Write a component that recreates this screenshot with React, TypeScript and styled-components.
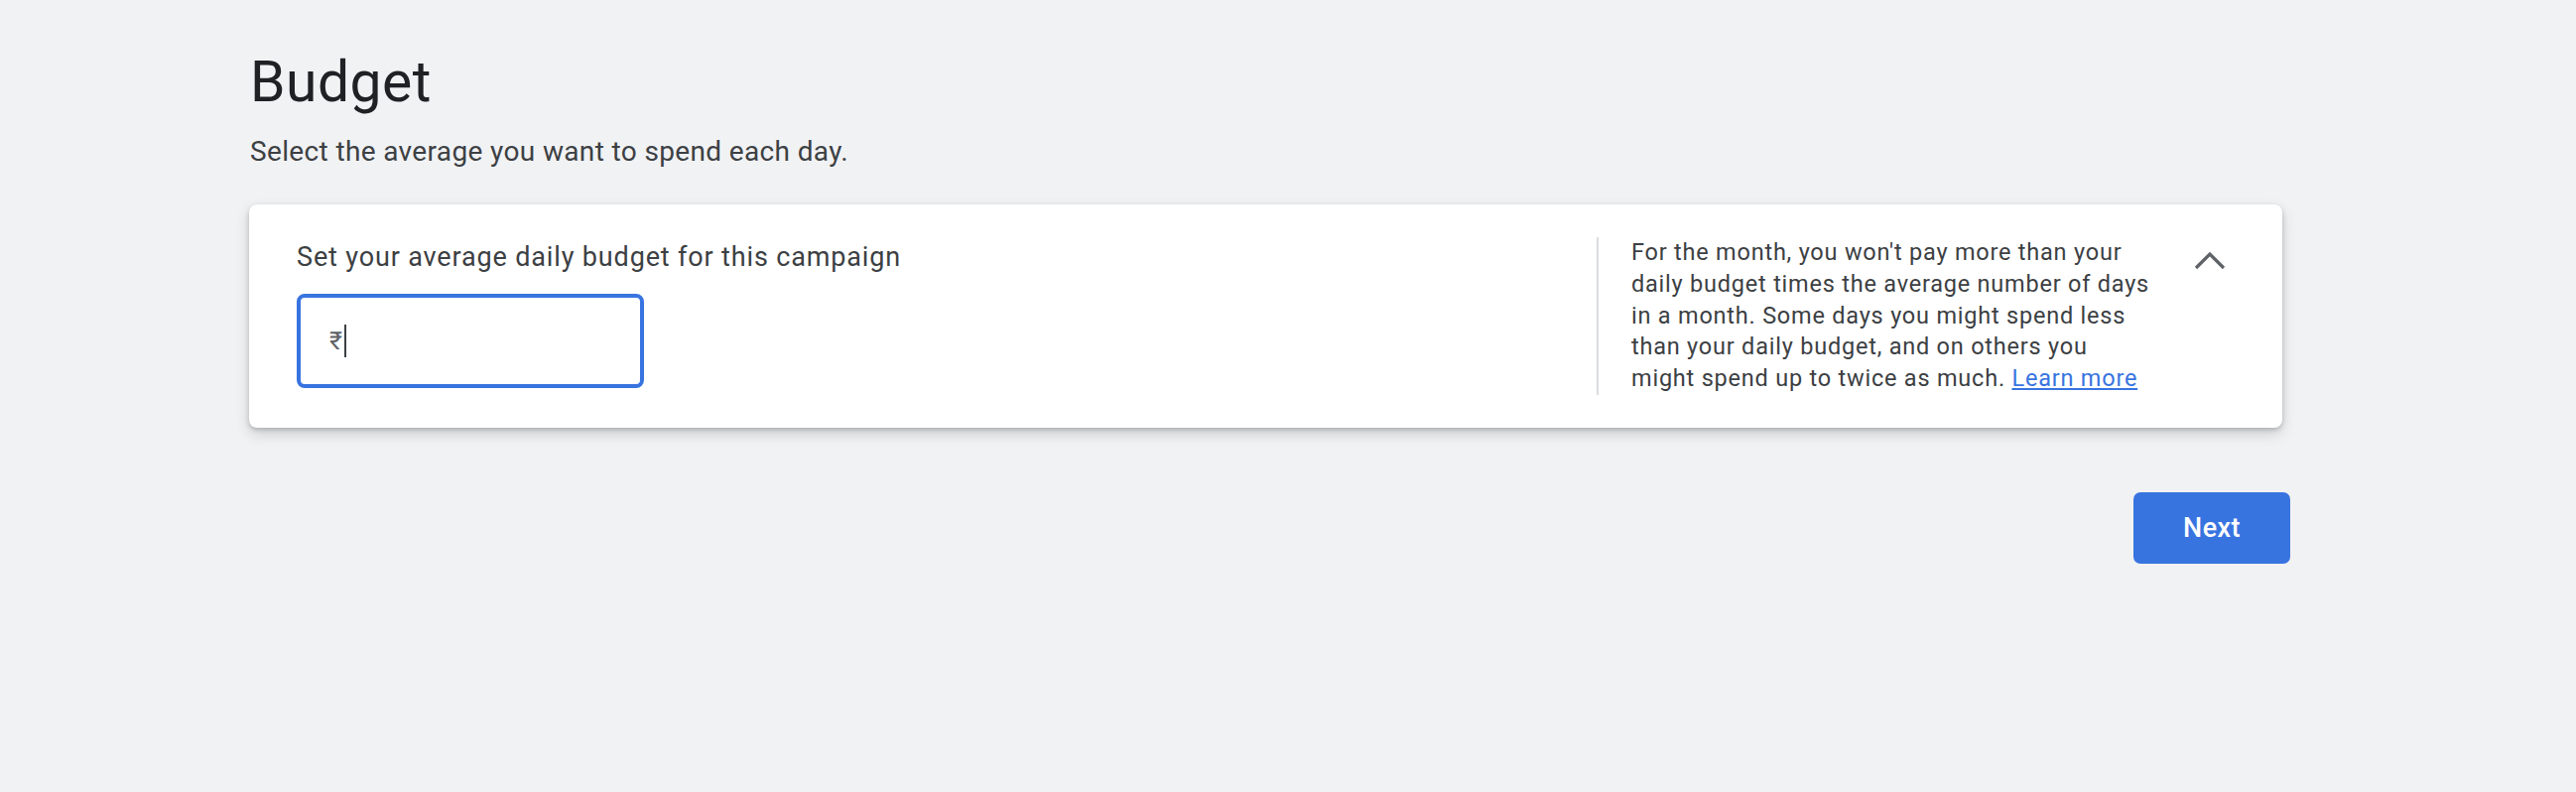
import React from "react";
import styled, { createGlobalStyle } from "styled-components";

const GlobalStyle = createGlobalStyle`
  html, body {
    margin: 0;
    padding: 0;
    background: #f1f2f4;
    font-family: Roboto, "Liberation Sans", sans-serif;
  }
`;

const Page = styled.div`
  min-height: 798px;
  padding: 49px 0 0 252px;
  box-sizing: border-box;
`;

const Content = styled.div`
  width: 2056px;
  display: flex;
  flex-direction: column;
`;

const Title = styled.h1`
  margin: 0;
  font-size: 57px;
  line-height: 68px;
  font-weight: 400;
  letter-spacing: 0.5px;
  color: #202124;
`;

const Subtitle = styled.p`
  margin: 18px 0 0;
  font-size: 28px;
  line-height: 36px;
  letter-spacing: 0.36px;
  color: #3c4043;
`;

const Card = styled.section`
  margin: 35px 8px 0 -1px;
  background: #fff;
  border-radius: 8px;
  box-shadow: 0 2px 4px rgba(60, 64, 67, 0.25), 0 6px 14px rgba(60, 64, 67, 0.2);
  display: flex;
  align-items: center;
  padding: 32px 53px 32px 48px;
`;

const Main = styled.div`
  flex: 1;
  display: flex;
  flex-direction: column;
  gap: 19px;
  padding: 4px 0 8px;
`;

const Label = styled.div`
  font-size: 27px;
  line-height: 35px;
  letter-spacing: 0.85px;
  color: #3c4043;
`;

const Field = styled.div`
  width: 350px;
  height: 95px;
  box-sizing: border-box;
  border: 4px solid #3874e0;
  border-radius: 8px;
  display: flex;
  align-items: center;
  padding-left: 29px;
`;

const Currency = styled.span`
  font-size: 25px;
  color: #5f6368;
`;

const Caret = styled.span`
  width: 2px;
  height: 33px;
  margin-left: 2px;
  background: #3c4043;
`;

const Aside = styled.div`
  display: flex;
  align-items: flex-start;
  border-left: 2px solid #dadce0;
  padding-left: 33px;
`;

const Help = styled.p`
  margin: 0;
  width: 527px;
  font-size: 23.5px;
  line-height: 31.7px;
  letter-spacing: 0.78px;
  color: #3c4043;
`;

const Link = styled.a`
  color: #3874e0;
  text-decoration: underline;
`;

const Toggle = styled.button`
  margin: 14px 0 0 36px;
  padding: 0;
  border: none;
  background: none;
  width: 40px;
  display: flex;
  justify-content: center;
`;

const Footer = styled.div`
  display: flex;
  justify-content: flex-end;
  margin-top: 65px;
`;

const NextButton = styled.button`
  width: 158px;
  height: 72px;
  border: none;
  border-radius: 7px;
  background: #3874e0;
  color: #fff;
  font-family: Roboto, "Liberation Sans", sans-serif;
  font-size: 27px;
  font-weight: 500;
  letter-spacing: 0.4px;
`;

export default function App() {
  return (
    <>
      <GlobalStyle />
      <Page>
        <Content>
          <Title>Budget</Title>
          <Subtitle>Select the average you want to spend each day.</Subtitle>
          <Card>
            <Main>
              <Label>Set your average daily budget for this campaign</Label>
              <Field>
                <Currency>₹</Currency>
                <Caret />
              </Field>
            </Main>
            <Aside>
              <Help>
                For the month, you won't pay more than your daily budget times
                the average number of days in a month. Some days you might spend
                less than your daily budget, and on others you might spend up to
                twice as much. <Link href="#">Learn more</Link>
              </Help>
              <Toggle aria-label="Collapse">
                <svg width="32" height="19" viewBox="0 0 32 19">
                  <polyline
                    points="2,17 16,3 30,17"
                    fill="none"
                    stroke="#5f6368"
                    strokeWidth="3.2"
                  />
                </svg>
              </Toggle>
            </Aside>
          </Card>
          <Footer>
            <NextButton>Next</NextButton>
          </Footer>
        </Content>
      </Page>
    </>
  );
}
